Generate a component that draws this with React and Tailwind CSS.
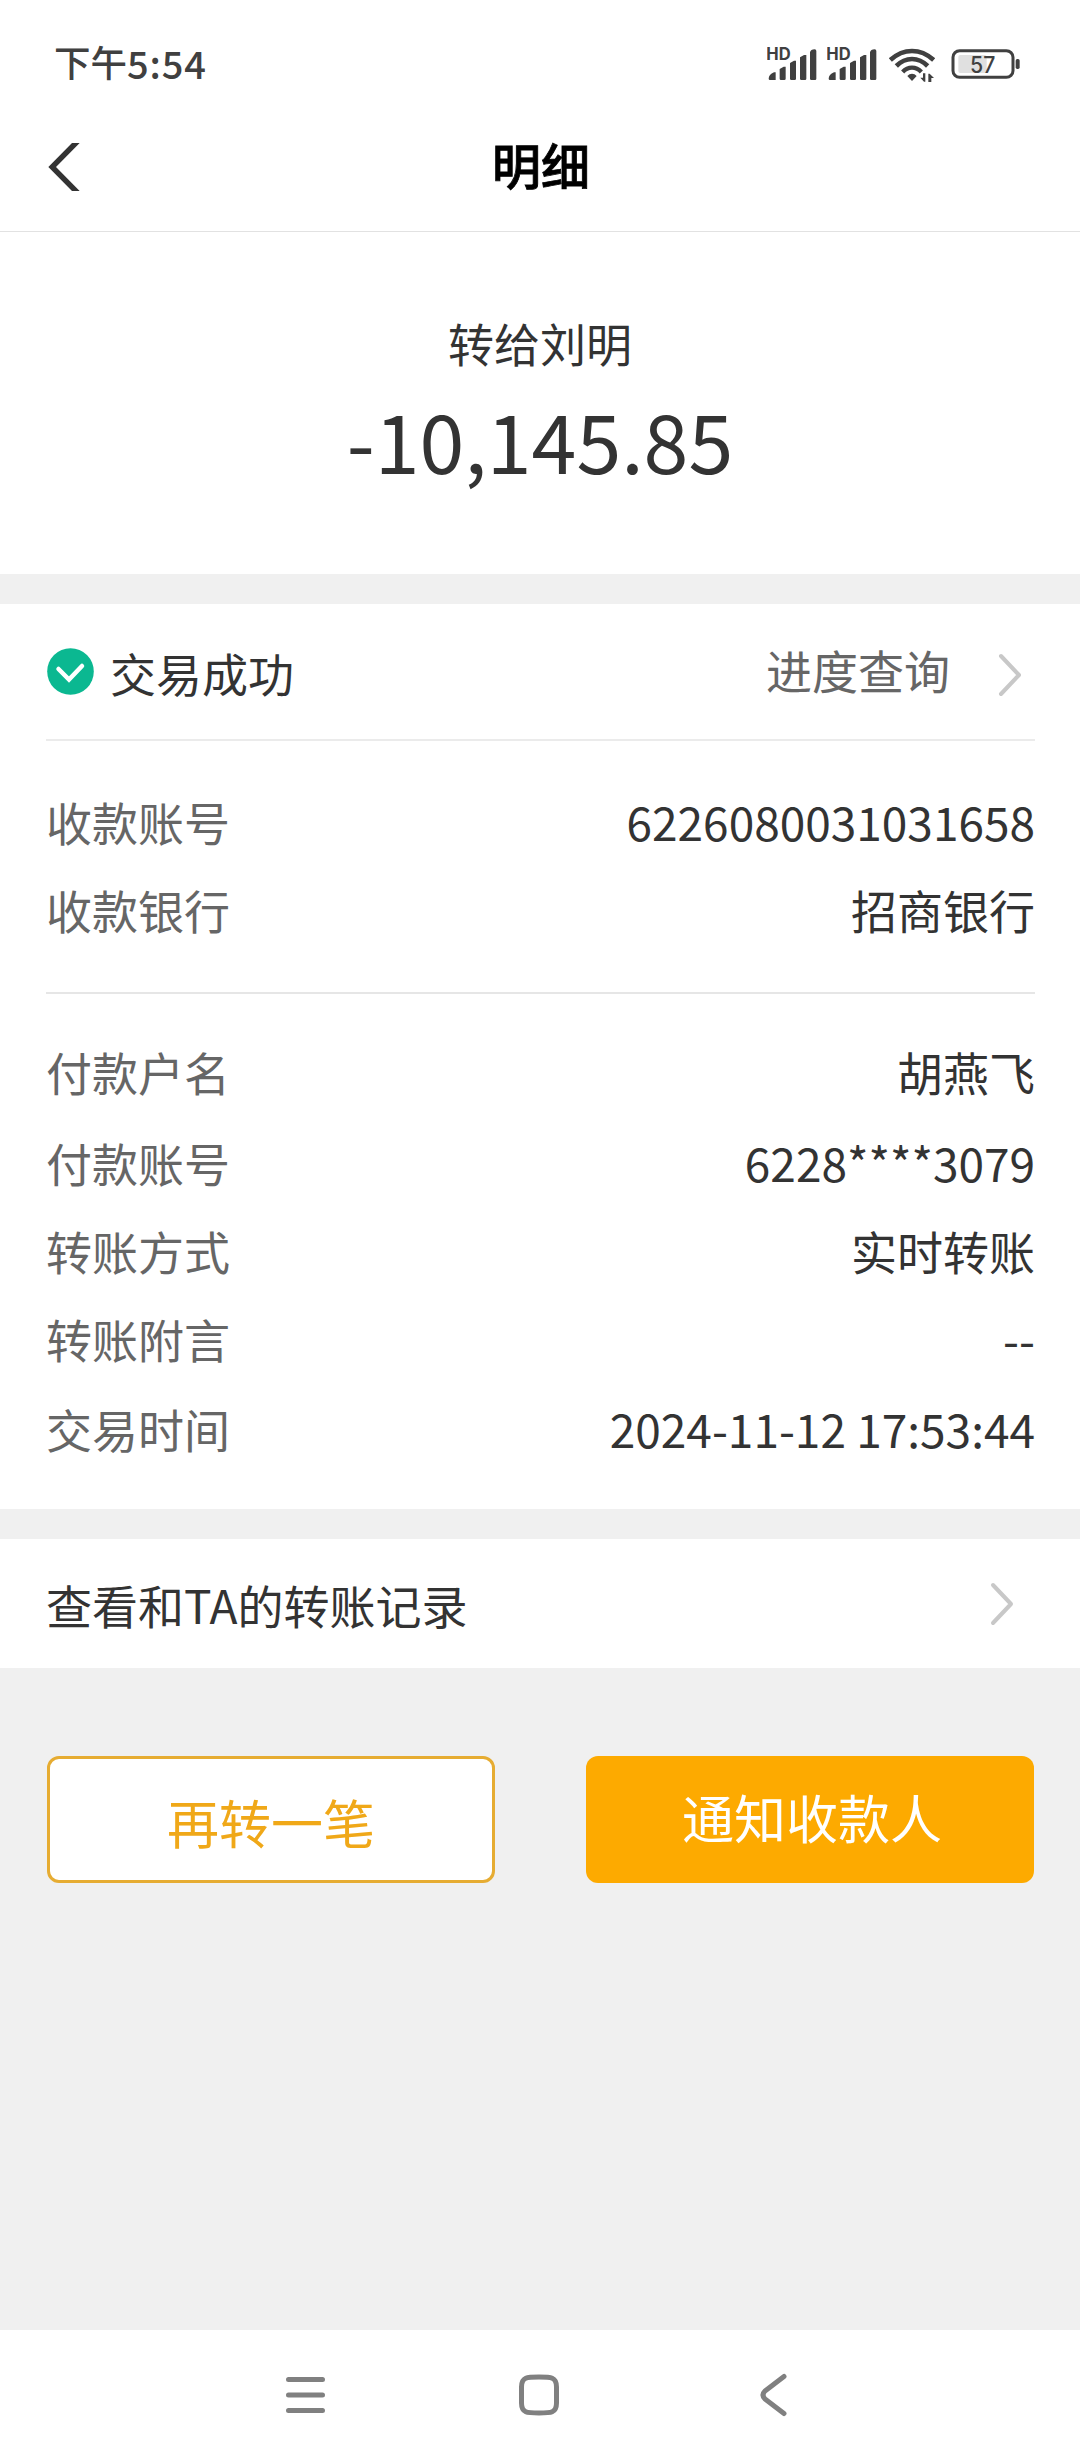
import React from "react";

const payeeRows = [
  { label: "收款账号", value: "6226080031031658" },
  { label: "收款银行", value: "招商银行" },
];

const payerRows = [
  { label: "付款户名", value: "胡燕飞" },
  { label: "付款账号", value: "6228****3079", className: "mt-[3px]" },
  { label: "转账方式", value: "实时转账" },
  { label: "转账附言", value: "--" },
  { label: "交易时间", value: "2024-11-12 17:53:44", className: "mt-[2px]" },
];

const SignalIcon = ({ className }) => (
  <svg className={`w-[50px] h-[43px] ${className}`} viewBox="0 0 150 129" fill="#404040">
    <text x="-2" y="58" fontSize="50" fontWeight="700" fontFamily="Inter, sans-serif" textLength="73" lengthAdjust="spacingAndGlyphs">
      HD
    </text>
    <path d="M5 113q0-12 16-19h5v23H9q-4 0-4-4zM38 84l12-7h6v36q0 4-4 4H42q-4 0-4-4zM69 66l12-7h6v54q0 4-4 4H73q-4 0-4-4zM99 49l12-7h7v71q0 4-4 4h-11q-4 0-4-4zM129 34q2-9 14-9 5 0 5 5v83q0 4-4 4h-11q-4 0-4-4z" />
  </svg>
);

const WifiIcon = ({ className }) => (
  <svg className={`w-[46px] h-[43px] ${className}`} viewBox="0 0 138 129" fill="none" stroke="#404040">
    <path d="M4 57Q34 30 69 30T134 57" strokeWidth="14" />
    <path d="M22 75Q43 54 69 54T116 75" strokeWidth="14" />
    <path d="M41 93Q53 80 69 80T97 93" strokeWidth="13" />
    <path d="M69 98q8 0 14 7L69 120 55 105q6-7 14-7z" fill="#404040" stroke="none" />
    <path d="M109 97v25h-4l-11-12h8V97zM118 123V98h4l13 13h-8v12z" fill="#404040" stroke="none" />
  </svg>
);

const BatteryIcon = () => (
  <svg className="w-[70px] h-[43px]" viewBox="0 0 210 129">
    <rect x="22" y="42" width="85" height="54" rx="6" fill="#e0e0e0" />
    <rect x="6" y="29" width="180" height="80" rx="20" fill="none" stroke="#404040" strokeWidth="9" />
    <rect x="194" y="54" width="12" height="30" rx="5" fill="#404040" />
    <text x="57" y="96" fontSize="68" fontWeight="500" fontFamily="Inter, sans-serif" fill="#404040" textLength="76" lengthAdjust="spacingAndGlyphs">
      57
    </text>
  </svg>
);

const Chevron = ({ className }) => (
  <svg className={`w-6 h-11 ${className}`} viewBox="0 0 24 44" fill="none" stroke="#c8c8c8" strokeWidth="4" strokeLinecap="round" strokeLinejoin="round">
    <path d="M3 3l18 19L3 41" />
  </svg>
);

const DetailRow = ({ label, value, className = "" }) => (
  <div className={`h-[88px] flex items-center justify-between ${className}`}>
    <span className="text-[#666]">{label}</span>
    <span>{value}</span>
  </div>
);

const App = () => {
  return (
    <div className="w-[1080px] h-[2460px] flex flex-col bg-[#f0f0f0] text-[#333] text-[46px] leading-none whitespace-nowrap font-['Noto_Sans_CJK_SC',sans-serif]">
      {/* Status Bar */}
      <div className="h-[84px] pt-[41px] pl-[54px] pr-[59px] flex items-center justify-between bg-white text-[#404040]">
        <div className="flex items-center font-medium text-[36.5px]">
          <span>下午</span>
          <span className="text-[38px] tracking-[0.9px]">5:54</span>
        </div>
        <div className="flex items-center">
          <SignalIcon className="mr-2.5" />
          <SignalIcon className="mr-3" />
          <WifiIcon className="mr-4" />
          <BatteryIcon />
        </div>
      </div>

      {/* Header */}
      <header className="h-[148px] pt-3 px-12 grid grid-cols-3 items-center bg-white border-b border-[#e2e2e2]">
        <svg className="w-8 h-12 mt-1.5" viewBox="0 0 94 144" fill="#333">
          <path d="M71 0h23L23 72l71 72H71L0 72z" />
        </svg>
        <h1 className="pl-0.5 text-center text-[49px] font-medium text-black [-webkit-text-stroke:0.8px_black]">明细</h1>
      </header>

      {/* Amount */}
      <section className="h-[342px] pt-[87px] flex flex-col items-center bg-white">
        <p>转给刘明</p>
        <p className="mt-[34px] text-[80.7px]">-10,145.85</p>
      </section>

      {/* Transaction Detail */}
      <section className="mt-[30px] h-[905px] pl-[46px] pr-[45px] bg-white">
        <div className="h-[137px] flex items-start justify-between border-b-2 border-[#ebebeb]">
          <div className="flex items-start">
            <svg className="w-[47px] h-[47px] mt-11 ml-px" viewBox="0 0 47 47" fill="none">
              <circle cx="23.5" cy="23.5" r="23.3" fill="#0bb891" />
              <path d="M11.5 21L22 31.5L35 18" stroke="#fff" strokeWidth="4.5" strokeLinecap="round" />
            </svg>
            <span className="mt-[45px] ml-4">交易成功</span>
          </div>
          <div className="flex items-start text-[#666]">
            <span className="mt-[42px]">进度查询</span>
            <Chevron className="mt-[49px] ml-12 mr-[13px]" />
          </div>
        </div>

        <div className="h-[253px] pt-[36px] border-b-2 border-[#e6e6e6]">
          {payeeRows.map((row) => (
            <DetailRow key={row.label} {...row} />
          ))}
        </div>

        <div className="pt-[33px]">
          {payerRows.map((row) => (
            <DetailRow key={row.label} {...row} />
          ))}
        </div>
      </section>

      {/* Transfer Records */}
      <section className="mt-[30px] h-[129px] px-[46px] flex items-center justify-between bg-white">
        <span>查看和TA的转账记录</span>
        <Chevron className="mr-5" />
      </section>

      {/* Actions */}
      <div className="mt-[88px] pl-[47px] pr-[46px] flex justify-between text-[52px]">
        <button className="w-[448px] h-[127px] pt-[5px] rounded-xl border-3 border-[#e6ac32] bg-white text-[#f0a818]">
          再转一笔
        </button>
        <button className="w-[448px] h-[127px] pb-1.5 pl-1 rounded-xl bg-[#fdaa00] text-white">
          通知收款人
        </button>
      </div>

      {/* System Navigation */}
      <nav className="mt-auto h-[130px] pl-[285px] pr-[293px] flex items-center justify-between bg-white">
        <svg className="w-10 h-11" viewBox="0 0 40 44" stroke="#808080" strokeWidth="5" strokeLinecap="round">
          <path d="M3.5 6.5h34M3.5 22h34M3.5 37.5h34" />
        </svg>
        <svg className="w-11 h-11 mr-1.5" viewBox="0 0 44 44" fill="none" stroke="#808080" strokeWidth="5">
          <path d="M22 4C34 4 39.5 4 39.5 14V30C39.5 40 34 40 22 40S4.5 40 4.5 30V14C4.5 4 10 4 22 4z" />
        </svg>
        <svg className="w-7 h-11" viewBox="0 0 28 44" fill="none" stroke="#808080" strokeWidth="5" strokeLinecap="round" strokeLinejoin="round">
          <path d="M25 3.500L6 18Q2 22 6 26L25 40.500" />
        </svg>
      </nav>
    </div>
  );
};

export default App;
